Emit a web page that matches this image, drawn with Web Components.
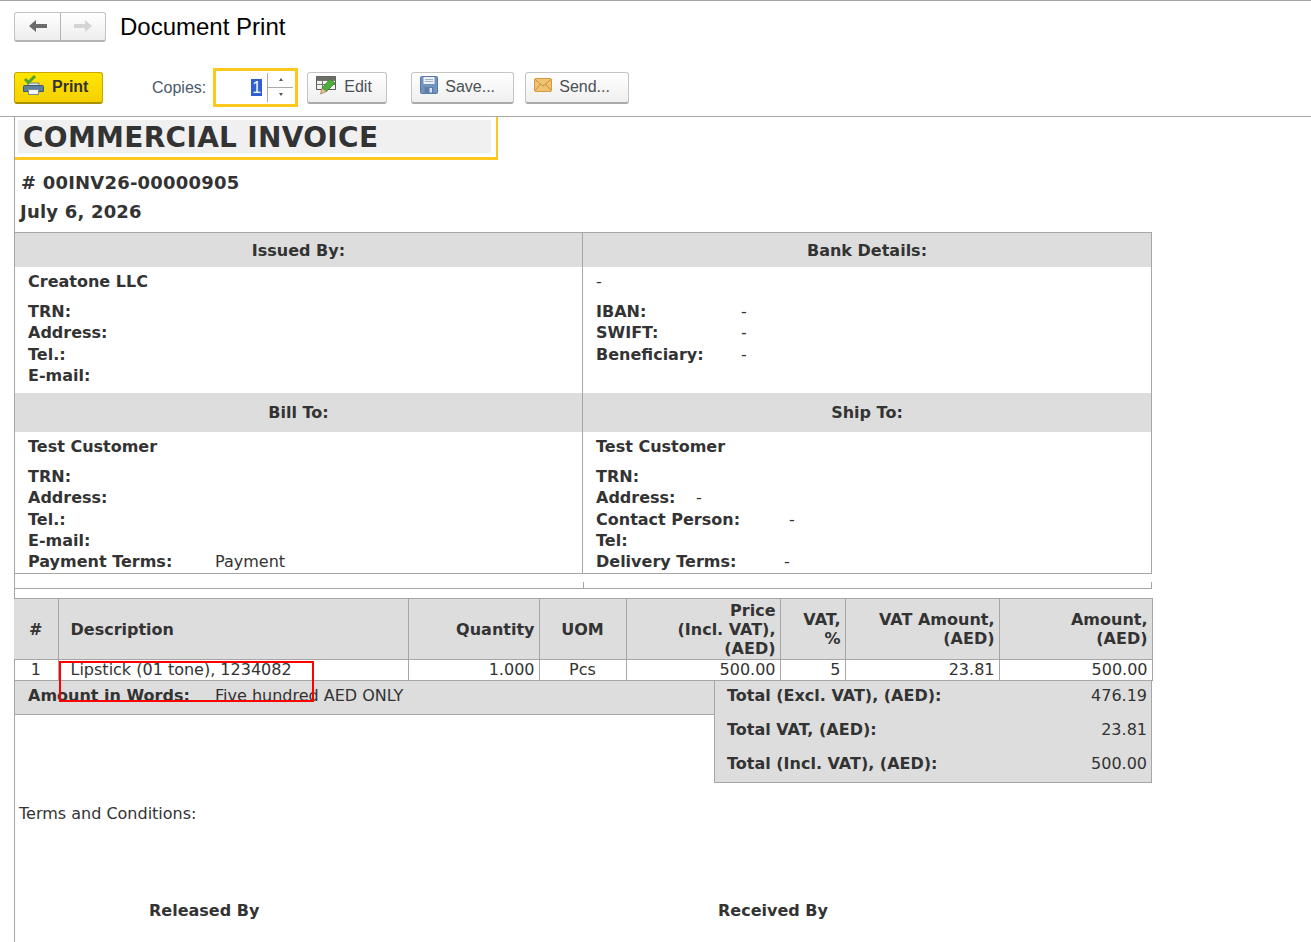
<!DOCTYPE html>
<html>
<head>
<meta charset="utf-8">
<title>Document Print</title>
<style>
  html, body { margin: 0; padding: 0; background: #fff; height: 942px; overflow: hidden; }
  body { font-family: "DejaVu Sans", sans-serif; color: #333; }
</style>
</head>
<body>
<print-page>
  <nav-bar slot="nav" heading="Document Print"></nav-bar>
  <print-toolbar slot="tools"></print-toolbar>
  <invoice-doc slot="doc"></invoice-doc>
</print-page>

<script>
// Inline icons for the toolbar
const icons = {
  print: `<svg width="22" height="22" viewBox="0 0 22 22">
    <path d="M5 9h11v3H5z" fill="#dfe5ea" stroke="#6f7f8c"/>
    <path d="M1.500 11.500h18a1 1 0 0 1 1 1v5h-20v-5a1 1 0 0 1 1-1z" fill="#5d8199" stroke="#41596b"/>
    <path d="M5.500 15.500h10v5h-10z" fill="#f4f6f7" stroke="#7b8a95"/>
    <path d="M2 5l3.500 3.500L12 2" fill="none" stroke="#4fa32c" stroke-width="3"/>
  </svg>`,
  edit: `<svg width="21" height="20" viewBox="0 0 21 20">
    <path d="M.5 1.500h19v13H.5z" fill="#f3f3f1" stroke="#5b5b57"/>
    <path d="M.5 5.500h19M.5 9.500h19M6.500 1.500v13M13 1.500v13" stroke="#77776f" fill="none"/>
    <path d="M.5 1.500h19v3.500H.5z" fill="#6d6d68"/>
    <path d="M14 4l5 4-8.500 8.500-4.500-3.500z" fill="#4cae3c" stroke="#2e7d27" stroke-width=".7"/>
    <path d="M6 13l4.500 3.500L4.500 19z" fill="#e6c48f" stroke="#8a6a3a" stroke-width=".6"/>
  </svg>`,
  save: `<svg width="18" height="18" viewBox="0 0 18 18">
    <path d="M.5 1.500a1 1 0 0 1 1-1h15a1 1 0 0 1 1 1v15a1 1 0 0 1-1 1h-15a1 1 0 0 1-1-1z" fill="#6f94c0" stroke="#557aa8"/>
    <path d="M3.500 1h11v7h-11z" fill="#eef2f7"/>
    <path d="M5 3.500h8M5 5.500h8" stroke="#9db4cf"/>
    <path d="M4.500 11h9v6.500h-9z" fill="#5f7fa6"/>
    <path d="M9.500 12h2.500v4.500H9.500z" fill="#d9e2ee"/>
  </svg>`,
  send: `<svg width="18" height="14" viewBox="0 0 18 14">
    <rect x=".5" y=".5" width="17" height="13" rx="1.500" fill="#f0c274" stroke="#d59a3c"/>
    <path d="M1 1.500l8 6.500 8-6.500M1 12.500l5.500-6.500M17 12.500l-5.500-6.500" fill="none" stroke="#cd8f34"/>
  </svg>`
};

class PrintPage extends HTMLElement {
  constructor() {
    super();
    this.attachShadow({ mode: 'open' });
    this.shadowRoot.innerHTML = `
      <style>
        :host { display: block; border-top: 1px solid #a6a6a6; height: 941px; }
        .tools { border-bottom: 1px solid #a6a6a6; }
      </style>
      <slot name="nav"></slot>
      <div class="tools"><slot name="tools"></slot></div>
      <slot name="doc"></slot>
    `;
  }
}
customElements.define('print-page', PrintPage);

class NavBar extends HTMLElement {
  constructor() {
    super();
    this.attachShadow({ mode: 'open' });
    this.shadowRoot.innerHTML = `
      <style>
        :host { display: flex; align-items: center; height: 29px; padding: 11px 0 0 14px; font-family: "Liberation Sans", sans-serif; }
        .group { display: flex; width: 92px; height: 30px; box-sizing: border-box; border: 1px solid #c4c4c4; border-bottom: 2px solid #b4b4b4; border-radius: 3px;
                 background: linear-gradient(#fff, #ededed); }
        .group div { flex: 1; display: flex; align-items: center; justify-content: center; }
        .group div:first-child { flex: 0 0 45px; border-right: 1px solid #b4b4b4; }
        h1 { margin: 0 0 0 14px; font-size: 24px; font-weight: 400; color: #000; line-height: 30px; }
      </style>
      <div class="group">
        <div><svg width="18" height="14" viewBox="0 0 18 14"><path d="M0 7l7-6v4h11v4H7v4z" fill="#6b6b6b"/></svg></div>
        <div><svg width="18" height="14" viewBox="0 0 18 14"><path d="M18 7l-7-6v4H0v4h11v4z" fill="#d4d4d4"/></svg></div>
      </div>
      <h1></h1>
    `;
    this.shadowRoot.querySelector('h1').textContent = this.getAttribute('heading') || '';
  }
}
customElements.define('nav-bar', NavBar);

class ToolButton extends HTMLElement {
  constructor() {
    super();
    this.attachShadow({ mode: 'open' });
    this.shadowRoot.innerHTML = `
      <style>
        :host { display: inline-flex; align-items: center; box-sizing: border-box; height: 32px; padding-left: 8px; gap: 7px;
                border: 1px solid #c4c4c4; border-bottom: 2px solid #aaa; border-radius: 3px; background: linear-gradient(#fff, #efefef);
                font: 16px "Liberation Sans", sans-serif; color: #4a4f55; }
        :host([primary]) { background: linear-gradient(#ffe600, #f5d000); border-color: #c8a800; border-bottom-color: #a89000; color: #333; font-weight: 700; }
        .icon { display: flex; }
      </style>
      <span class="icon"><slot name="icon"></slot></span>
      <slot></slot>
    `;
  }
}
customElements.define('tool-button', ToolButton);

class CopiesInput extends HTMLElement {
  constructor() {
    super();
    this.attachShadow({ mode: 'open' });
    this.shadowRoot.innerHTML = `
      <style>
        :host { display: flex; box-sizing: border-box; width: 85px; height: 39px; border: 3px solid #fcc81e; background: #fff;
                font: 16px "Liberation Sans", sans-serif; align-items: center; }
        .val { flex: 1; text-align: right; padding-right: 5px; }
        .val span { background: #2f5fd0; color: #fff; padding: 0 1px; }
        .spin { width: 25px; height: 29px; margin-right: 2px; border-left: 1px solid #aaa; display: grid; grid-template-rows: 1fr 1fr; }
        .spin div { display: flex; align-items: center; justify-content: center; font-size: 0; }
        .spin div:first-child { border-bottom: 1px solid #aaa; }
        .up { width: 0; height: 0; border: 2px solid transparent; border-top: 0; border-bottom: 3px solid #555; }
        .down { width: 0; height: 0; border: 2px solid transparent; border-bottom: 0; border-top: 3px solid #555; }
      </style>
      <div class="val"><span>1</span></div>
      <div class="spin">
        <div><i class="up"></i></div>
        <div><i class="down"></i></div>
      </div>
    `;
  }
}
customElements.define('copies-input', CopiesInput);

class PrintToolbar extends HTMLElement {
  constructor() {
    super();
    this.attachShadow({ mode: 'open' });
    this.shadowRoot.innerHTML = `
      <style>
        :host { display: flex; align-items: center; height: 39px; padding: 27px 0 9px 14px; font: 16px "Liberation Sans", sans-serif; }
        label { color: #4a5a6a; margin: 0 7px 0 49px; }
        .print { width: 89px; }
        .edit { width: 80px; margin-left: 9px; }
        .save { width: 103px; margin-left: 24px; }
        .send { width: 104px; margin-left: 11px; }
      </style>
      <tool-button class="print" primary><span slot="icon">${icons.print}</span>Print</tool-button>
      <label>Copies:</label>
      <copies-input></copies-input>
      <tool-button class="edit"><span slot="icon">${icons.edit}</span>Edit</tool-button>
      <tool-button class="save"><span slot="icon">${icons.save}</span>Save...</tool-button>
      <tool-button class="send"><span slot="icon">${icons.send}</span>Send...</tool-button>
    `;
  }
}
customElements.define('print-toolbar', PrintToolbar);

// Label + value line inside a party cell
class FieldRow extends HTMLElement {
  constructor() {
    super();
    this.attachShadow({ mode: 'open' });
    const width = this.getAttribute('label-width') || '0';
    this.shadowRoot.innerHTML = `
      <style>
        :host { display: flex; height: 21.33px; line-height: 21.33px; white-space: nowrap; }
        b { display: inline-block; min-width: ${width}px; }
      </style>
      <b></b><span><slot></slot></span>
    `;
    this.shadowRoot.querySelector('b').textContent = this.getAttribute('label');
  }
}
customElements.define('field-row', FieldRow);

class PartyCell extends HTMLElement {
  constructor() {
    super();
    this.attachShadow({ mode: 'open' });
    this.shadowRoot.innerHTML = `
      <style>
        :host { display: block; box-sizing: border-box; padding: 4px 0 0 13px; }
        .name { height: 30px; line-height: 21.33px; }
        :host([plain]) .name { font-weight: 400; }
        .name { font-weight: 700; }
      </style>
      <div class="name"></div>
      <slot></slot>
    `;
    this.shadowRoot.querySelector('.name').textContent = this.getAttribute('name');
  }
}
customElements.define('party-cell', PartyCell);

class PartyTable extends HTMLElement {
  constructor() {
    super();
    this.attachShadow({ mode: 'open' });
    this.shadowRoot.innerHTML = `
      <style>
        :host { display: grid; grid-template-columns: 568px 569px; grid-template-rows: 34px 126px 39px 141px 16px;
                width: 1138px; box-sizing: border-box; border-top: 1px solid #a6a6a6; font-size: 16px; }
        .head { background: #ddd; font-weight: 700; display: flex; align-items: center; justify-content: center; }
        .l { border-right: 1px solid #a6a6a6; }
        .r { border-right: 1px solid #a6a6a6; }
        .end { border-top: 1px solid #a6a6a6; border-bottom: 1px solid #a6a6a6; }
        .tick { height: 6px; margin-top: 10px; }
        .bar { grid-column: 1 / 3; position: relative; border-top: 1px solid #a6a6a6; border-bottom: 1px solid #a6a6a6; }
        .bar i { position: absolute; bottom: 0; width: 1px; height: 6px; background: #a6a6a6; }
      </style>
      <div class="head l">Issued By:</div><div class="head r">Bank Details:</div>
      <party-cell class="l" name="Creatone LLC">
        <field-row label="TRN:"></field-row>
        <field-row label="Address:"></field-row>
        <field-row label="Tel.:"></field-row>
        <field-row label="E-mail:"></field-row>
      </party-cell>
      <party-cell class="r" plain name="-">
        <field-row label="IBAN:" label-width="145">-</field-row>
        <field-row label="SWIFT:" label-width="145">-</field-row>
        <field-row label="Beneficiary:" label-width="145">-</field-row>
      </party-cell>
      <div class="head l">Bill To:</div><div class="head r">Ship To:</div>
      <party-cell class="l" name="Test Customer">
        <field-row label="TRN:"></field-row>
        <field-row label="Address:"></field-row>
        <field-row label="Tel.:"></field-row>
        <field-row label="E-mail:"></field-row>
        <field-row label="Payment Terms:" label-width="187">Payment</field-row>
      </party-cell>
      <party-cell class="r" name="Test Customer">
        <field-row label="TRN:"></field-row>
        <field-row label="Address:" label-width="100">-</field-row>
        <field-row label="Contact Person:" label-width="193">-</field-row>
        <field-row label="Tel:"></field-row>
        <field-row label="Delivery Terms:" label-width="188">-</field-row>
      </party-cell>
      <div class="bar"><i style="left:568px"></i><i style="right:0"></i></div>
    `;
  }
}
customElements.define('party-table', PartyTable);

class ItemsTable extends HTMLElement {
  constructor() {
    super();
    this.attachShadow({ mode: 'open' });
    this.shadowRoot.innerHTML = `
      <style>
        :host { display: block; margin-top: 9px; font-size: 16px; position: relative; }
        table { border-collapse: collapse; table-layout: fixed; width: 1138px; }
        th, td { border: 1px solid #a6a6a6; padding: 0 4px; text-align: right; overflow: hidden; white-space: nowrap; }
        th { background: #ddd; height: 60px; line-height: 19px; font-weight: 700; }
        td { height: 20px; line-height: 20px; }
        tr > :first-child { border-left: 0; text-align: center; }
        .desc { text-align: left; padding-left: 12px; }
        .mid { text-align: center; }
      </style>
      <table>
        <colgroup>
          <col style="width:44px"><col style="width:350px"><col style="width:131px"><col style="width:87px">
          <col style="width:154px"><col style="width:65px"><col style="width:154px"><col style="width:153px">
        </colgroup>
        <tr>
          <th>#</th><th class="desc">Description</th><th>Quantity</th><th class="mid">UOM</th>
          <th>Price<br>(Incl. VAT),<br>(AED)</th><th>VAT,<br>%</th><th>VAT Amount,<br>(AED)</th><th>Amount,<br>(AED)</th>
        </tr>
        <tr>
          <td>1</td><td class="desc">Lipstick (01 tone), 1234082</td><td>1.000</td><td class="mid">Pcs</td>
          <td>500.00</td><td>5</td><td>23.81</td><td>500.00</td>
        </tr>
      </table>
    `;
  }
}
customElements.define('items-table', ItemsTable);

class TotalsBlock extends HTMLElement {
  constructor() {
    super();
    this.attachShadow({ mode: 'open' });
    this.shadowRoot.innerHTML = `
      <style>
        :host { display: flex; align-items: flex-start; width: 1137px; font-size: 16px; }
        .words { width: 699px; height: 33px; background: #ddd; border-bottom: 1px solid #a6a6a6; box-sizing: content-box; display: flex; padding-top: 0; line-height: 30px; }
        .words b { margin-left: 13px; width: 187px; }
        .sum { flex: 1; box-sizing: border-box; height: 102px; background: #ddd; border-left: 1px solid #a6a6a6; border-right: 1px solid #a6a6a6; border-bottom: 1px solid #a6a6a6; padding: 0 4px 0 12px; }
        .sum div { display: flex; justify-content: space-between; height: 34px; line-height: 30px; }
      </style>
      <div class="words"><b>Amount in Words:</b><span>Five hundred AED ONLY</span></div>
      <div class="sum">
        <div><b>Total (Excl. VAT), (AED):</b><span>476.19</span></div>
        <div><b>Total VAT, (AED):</b><span>23.81</span></div>
        <div><b>Total (Incl. VAT), (AED):</b><span>500.00</span></div>
      </div>
    `;
  }
}
customElements.define('totals-block', TotalsBlock);

class InvoiceDoc extends HTMLElement {
  constructor() {
    super();
    this.attachShadow({ mode: 'open' });
    this.shadowRoot.innerHTML = `
      <style>
        :host { display: block; box-sizing: border-box; position: relative; margin-left: 14px; height: 826px; border-left: 1px solid #a6a6a6; border-bottom: 1px solid #a6a6a6; color: #333; }
        .title { box-sizing: border-box; width: 483px; height: 43px; padding: 3px 5px 6px 3px; border-right: 2px solid #fcc81e; border-bottom: 3px solid #fcc81e; }
        .title div { background: #f0f0f0; height: 33px; padding-left: 5px; font-size: 28px; font-weight: 700; line-height: 36px; letter-spacing: .3px; white-space: nowrap; }
        .no { margin: 11px 0 0 6px; font-size: 18px; font-weight: 700; line-height: 24px; letter-spacing: .2px; }
        .date { margin: 5px 0 8px 5px; font-size: 18px; font-weight: 700; line-height: 24px; letter-spacing: .2px; }
        party-table { margin-left: -1px; margin-top: 0; border-left: 1px solid #a6a6a6; }
        items-table { margin-left: -1px; }
        .terms { margin: 20px 0 0 4px; font-size: 16px; line-height: 21px; }
        .signs { display: flex; margin-top: 76px; font-size: 16px; font-weight: 700; line-height: 21px; }
        .signs span:first-child { margin-left: 134px; width: 569px; }
        .mark { position: absolute; left: 44px; top: 544px; width: 255px; height: 41px; box-sizing: border-box; border: 2px solid #f00; }
      </style>
      <div class="title"><div>COMMERCIAL INVOICE</div></div>
      <div class="no"># 00INV26-00000905</div>
      <div class="date">July 6, 2026</div>
      <party-table></party-table>
      <items-table></items-table>
      <totals-block></totals-block>
      <div class="terms">Terms and Conditions:</div>
      <div class="signs"><span>Released By</span><span>Received By</span></div>
      <div class="mark"></div>
    `;
  }
}
customElements.define('invoice-doc', InvoiceDoc);
</script>
</body>
</html>
